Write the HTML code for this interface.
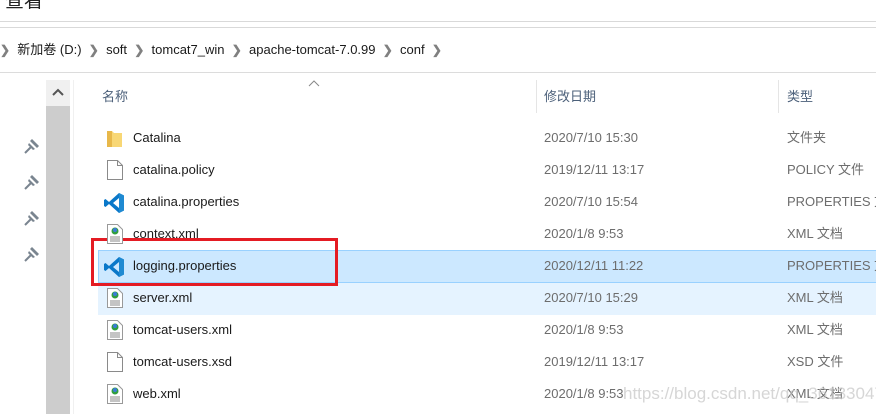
<!DOCTYPE html>
<html><head><meta charset="utf-8"><style>
*{margin:0;padding:0;box-sizing:border-box}
body{width:876px;height:414px;overflow:hidden;background:#fff;font-family:"Liberation Sans","Noto Sans CJK SC",sans-serif;font-size:13px;color:#1a1a1a;position:relative}
.a{position:absolute;white-space:nowrap;line-height:16px}
.d{color:#6d6d6d}
.chev{color:#808080;font-size:12px;font-weight:bold}
</style></head><body>
<div class="a" style="left:5px;top:-8px;font-size:19px;line-height:20px;color:#222">查看</div>
<div class="a" style="left:0;top:21px;width:876px;height:1px;background:#d9d9d9"></div>
<div class="a" style="left:0;top:27px;width:876px;height:1px;background:#d9d9d9"></div>
<div class="a" style="left:0;top:72px;width:876px;height:1px;background:#dcdcdc"></div>
<div class="a" style="left:0;top:42px;font-size:13px;color:#1a1a1a">
<span class="chev">❯</span>&nbsp; 新加卷 (D:) &nbsp;<span class="chev">❯</span>&nbsp; soft &nbsp;<span class="chev">❯</span>&nbsp; tomcat7_win &nbsp;<span class="chev">❯</span>&nbsp; apache-tomcat-7.0.99 &nbsp;<span class="chev">❯</span>&nbsp; conf &nbsp;<span class="chev">❯</span></div>
<div class="a" style="left:46px;top:80px;width:24px;height:334px;background:#cdcdcd"></div>
<div class="a" style="left:46px;top:80px;width:24px;height:26px;background:#f0f0f0"></div>
<svg class="a" style="left:52px;top:88px" width="12" height="8"><path d="M1 7L6 2L11 7" stroke="#555" stroke-width="2" fill="none"/></svg>
<div class="a" style="left:73px;top:80px;width:1px;height:334px;background:#f0f0f0"></div>
<svg class="a" style="left:24px;top:138px" width="16" height="16"><g fill="#7a8590"><path d="M8 1l7 7-2 2-7-7z"/><path d="M5 5l6 6-2 1-5-5z"/><path d="M7 9L1 15" stroke="#7a8590" stroke-width="2"/></g></svg>
<svg class="a" style="left:24px;top:174px" width="16" height="16"><g fill="#7a8590"><path d="M8 1l7 7-2 2-7-7z"/><path d="M5 5l6 6-2 1-5-5z"/><path d="M7 9L1 15" stroke="#7a8590" stroke-width="2"/></g></svg>
<svg class="a" style="left:24px;top:210px" width="16" height="16"><g fill="#7a8590"><path d="M8 1l7 7-2 2-7-7z"/><path d="M5 5l6 6-2 1-5-5z"/><path d="M7 9L1 15" stroke="#7a8590" stroke-width="2"/></g></svg>
<svg class="a" style="left:24px;top:246px" width="16" height="16"><g fill="#7a8590"><path d="M8 1l7 7-2 2-7-7z"/><path d="M5 5l6 6-2 1-5-5z"/><path d="M7 9L1 15" stroke="#7a8590" stroke-width="2"/></g></svg>
<svg class="a" style="left:308px;top:80px" width="12" height="7"><path d="M1 6L6 1L11 6" stroke="#888" fill="none"/></svg>
<div class="a" style="left:102px;top:89px;color:#4c607a">名称</div>
<div class="a" style="left:536px;top:80px;width:1px;height:33px;background:#e5e5e5"></div>
<div class="a" style="left:544px;top:89px;color:#4c607a">修改日期</div>
<div class="a" style="left:778px;top:80px;width:1px;height:33px;background:#e5e5e5"></div>
<div class="a" style="left:787px;top:89px;color:#4c607a">类型</div>
<div class="a" style="left:98px;top:250px;width:778px;height:33px;background:#cce8ff;border:1px solid #99d1ff;border-right:none"></div>
<div class="a" style="left:98px;top:283px;width:778px;height:32px;background:#e5f3ff"></div>
<div class="a" style="left:91px;top:238px;width:247px;height:48px;border:3px solid #e41b23"></div>
<svg class="a" style="left:106px;top:128px" width="18" height="20"><path d="M1 3h5l2 2h8v14H1z" fill="#f8d775"/><path d="M1 3h5v16H1z" fill="#e8b84a"/></svg>
<svg class="a" style="left:107px;top:160px" width="16" height="20"><path d="M.5.5h10l5 5v14H.5z" fill="#fff" stroke="#8a8a8a"/><path d="M10.5.5v5h5" fill="none" stroke="#8a8a8a"/></svg>
<svg class="a" style="left:103px;top:192px" width="22" height="22"><path d="M16 1l5 2.5v15L16 21 6 12l-3.5 3L1 14V8l1.5-1L6 10zM16 6l-6 5 6 5z" fill="#0a78c9"/><path d="M16 1l5 2.5v15L16 21z" fill="#1f8ad2"/></svg>
<svg class="a" style="left:103px;top:256px" width="22" height="22"><path d="M16 1l5 2.5v15L16 21 6 12l-3.5 3L1 14V8l1.5-1L6 10zM16 6l-6 5 6 5z" fill="#0a78c9"/><path d="M16 1l5 2.5v15L16 21z" fill="#1f8ad2"/></svg>
<svg class="a" style="left:107px;top:224px" width="16" height="20"><path d="M.5.5h10l5 5v14H.5z" fill="#fff" stroke="#999"/><circle cx="8" cy="7" r="3.5" fill="#2f9e3e"/><circle cx="8" cy="6" r="2" fill="#3b7bd8"/><path d="M3 13h10M3 15h10M3 17h10" stroke="#888"/></svg>
<svg class="a" style="left:107px;top:288px" width="16" height="20"><path d="M.5.5h10l5 5v14H.5z" fill="#fff" stroke="#999"/><circle cx="8" cy="7" r="3.5" fill="#2f9e3e"/><circle cx="8" cy="6" r="2" fill="#3b7bd8"/><path d="M3 13h10M3 15h10M3 17h10" stroke="#888"/></svg>
<svg class="a" style="left:107px;top:320px" width="16" height="20"><path d="M.5.5h10l5 5v14H.5z" fill="#fff" stroke="#999"/><circle cx="8" cy="7" r="3.5" fill="#2f9e3e"/><circle cx="8" cy="6" r="2" fill="#3b7bd8"/><path d="M3 13h10M3 15h10M3 17h10" stroke="#888"/></svg>
<svg class="a" style="left:107px;top:352px" width="16" height="20"><path d="M.5.5h10l5 5v14H.5z" fill="#fff" stroke="#8a8a8a"/><path d="M10.5.5v5h5" fill="none" stroke="#8a8a8a"/></svg>
<svg class="a" style="left:107px;top:384px" width="16" height="20"><path d="M.5.5h10l5 5v14H.5z" fill="#fff" stroke="#999"/><circle cx="8" cy="7" r="3.5" fill="#2f9e3e"/><circle cx="8" cy="6" r="2" fill="#3b7bd8"/><path d="M3 13h10M3 15h10M3 17h10" stroke="#888"/></svg>
<div class="a" style="left:133px;top:130px">Catalina</div><div class="a d" style="left:544px;top:130px">2020/7/10 15:30</div><div class="a d" style="left:787px;top:130px">文件夹</div>
<div class="a" style="left:133px;top:162px">catalina.policy</div><div class="a d" style="left:544px;top:162px">2019/12/11 13:17</div><div class="a d" style="left:787px;top:162px">POLICY 文件</div>
<div class="a" style="left:133px;top:194px">catalina.properties</div><div class="a d" style="left:544px;top:194px">2020/7/10 15:54</div><div class="a d" style="left:787px;top:194px">PROPERTIES 文件</div>
<div class="a" style="left:133px;top:226px">context.xml</div><div class="a d" style="left:544px;top:226px">2020/1/8 9:53</div><div class="a d" style="left:787px;top:226px">XML 文档</div>
<div class="a" style="left:133px;top:258px">logging.properties</div><div class="a d" style="left:544px;top:258px">2020/12/11 11:22</div><div class="a d" style="left:787px;top:258px">PROPERTIES 文件</div>
<div class="a" style="left:133px;top:290px">server.xml</div><div class="a d" style="left:544px;top:290px">2020/7/10 15:29</div><div class="a d" style="left:787px;top:290px">XML 文档</div>
<div class="a" style="left:133px;top:322px">tomcat-users.xml</div><div class="a d" style="left:544px;top:322px">2020/1/8 9:53</div><div class="a d" style="left:787px;top:322px">XML 文档</div>
<div class="a" style="left:133px;top:354px">tomcat-users.xsd</div><div class="a d" style="left:544px;top:354px">2019/12/11 13:17</div><div class="a d" style="left:787px;top:354px">XSD 文件</div>
<div class="a" style="left:133px;top:386px">web.xml</div><div class="a d" style="left:544px;top:386px">2020/1/8 9:53</div><div class="a d" style="left:787px;top:386px">XML 文档</div>
<div class="a" style="left:623px;top:384px;font-size:17px;line-height:20px;color:rgba(200,200,200,0.75)">https://blog.csdn.net/qq_36133047</div>
</body></html>
